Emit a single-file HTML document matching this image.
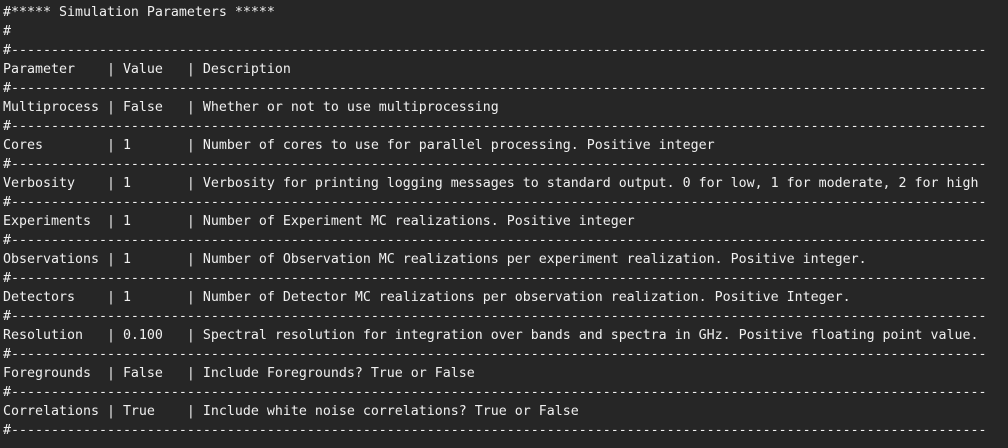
<!DOCTYPE html>
<html><head><meta charset="utf-8"><style>
html,body{margin:0;padding:0;background:#262626;width:1008px;height:448px;overflow:hidden}
pre{margin:0;padding:3px 0 0 3px;font-family:"DejaVu Sans Mono","Liberation Mono",monospace;font-size:13.29px;line-height:19px;color:#f0f0f0;white-space:pre}
</style></head><body><pre>#***** Simulation Parameters *****
#
#--------------------------------------------------------------------------------------------------------------------------
Parameter    | Value   | Description
#--------------------------------------------------------------------------------------------------------------------------
Multiprocess | False   | Whether or not to use multiprocessing
#--------------------------------------------------------------------------------------------------------------------------
Cores        | 1       | Number of cores to use for parallel processing. Positive integer
#--------------------------------------------------------------------------------------------------------------------------
Verbosity    | 1       | Verbosity for printing logging messages to standard output. 0 for low, 1 for moderate, 2 for high
#--------------------------------------------------------------------------------------------------------------------------
Experiments  | 1       | Number of Experiment MC realizations. Positive integer
#--------------------------------------------------------------------------------------------------------------------------
Observations | 1       | Number of Observation MC realizations per experiment realization. Positive integer.
#--------------------------------------------------------------------------------------------------------------------------
Detectors    | 1       | Number of Detector MC realizations per observation realization. Positive Integer.
#--------------------------------------------------------------------------------------------------------------------------
Resolution   | 0.100   | Spectral resolution for integration over bands and spectra in GHz. Positive floating point value.
#--------------------------------------------------------------------------------------------------------------------------
Foregrounds  | False   | Include Foregrounds? True or False
#--------------------------------------------------------------------------------------------------------------------------
Correlations | True    | Include white noise correlations? True or False
#--------------------------------------------------------------------------------------------------------------------------</pre></body></html>
